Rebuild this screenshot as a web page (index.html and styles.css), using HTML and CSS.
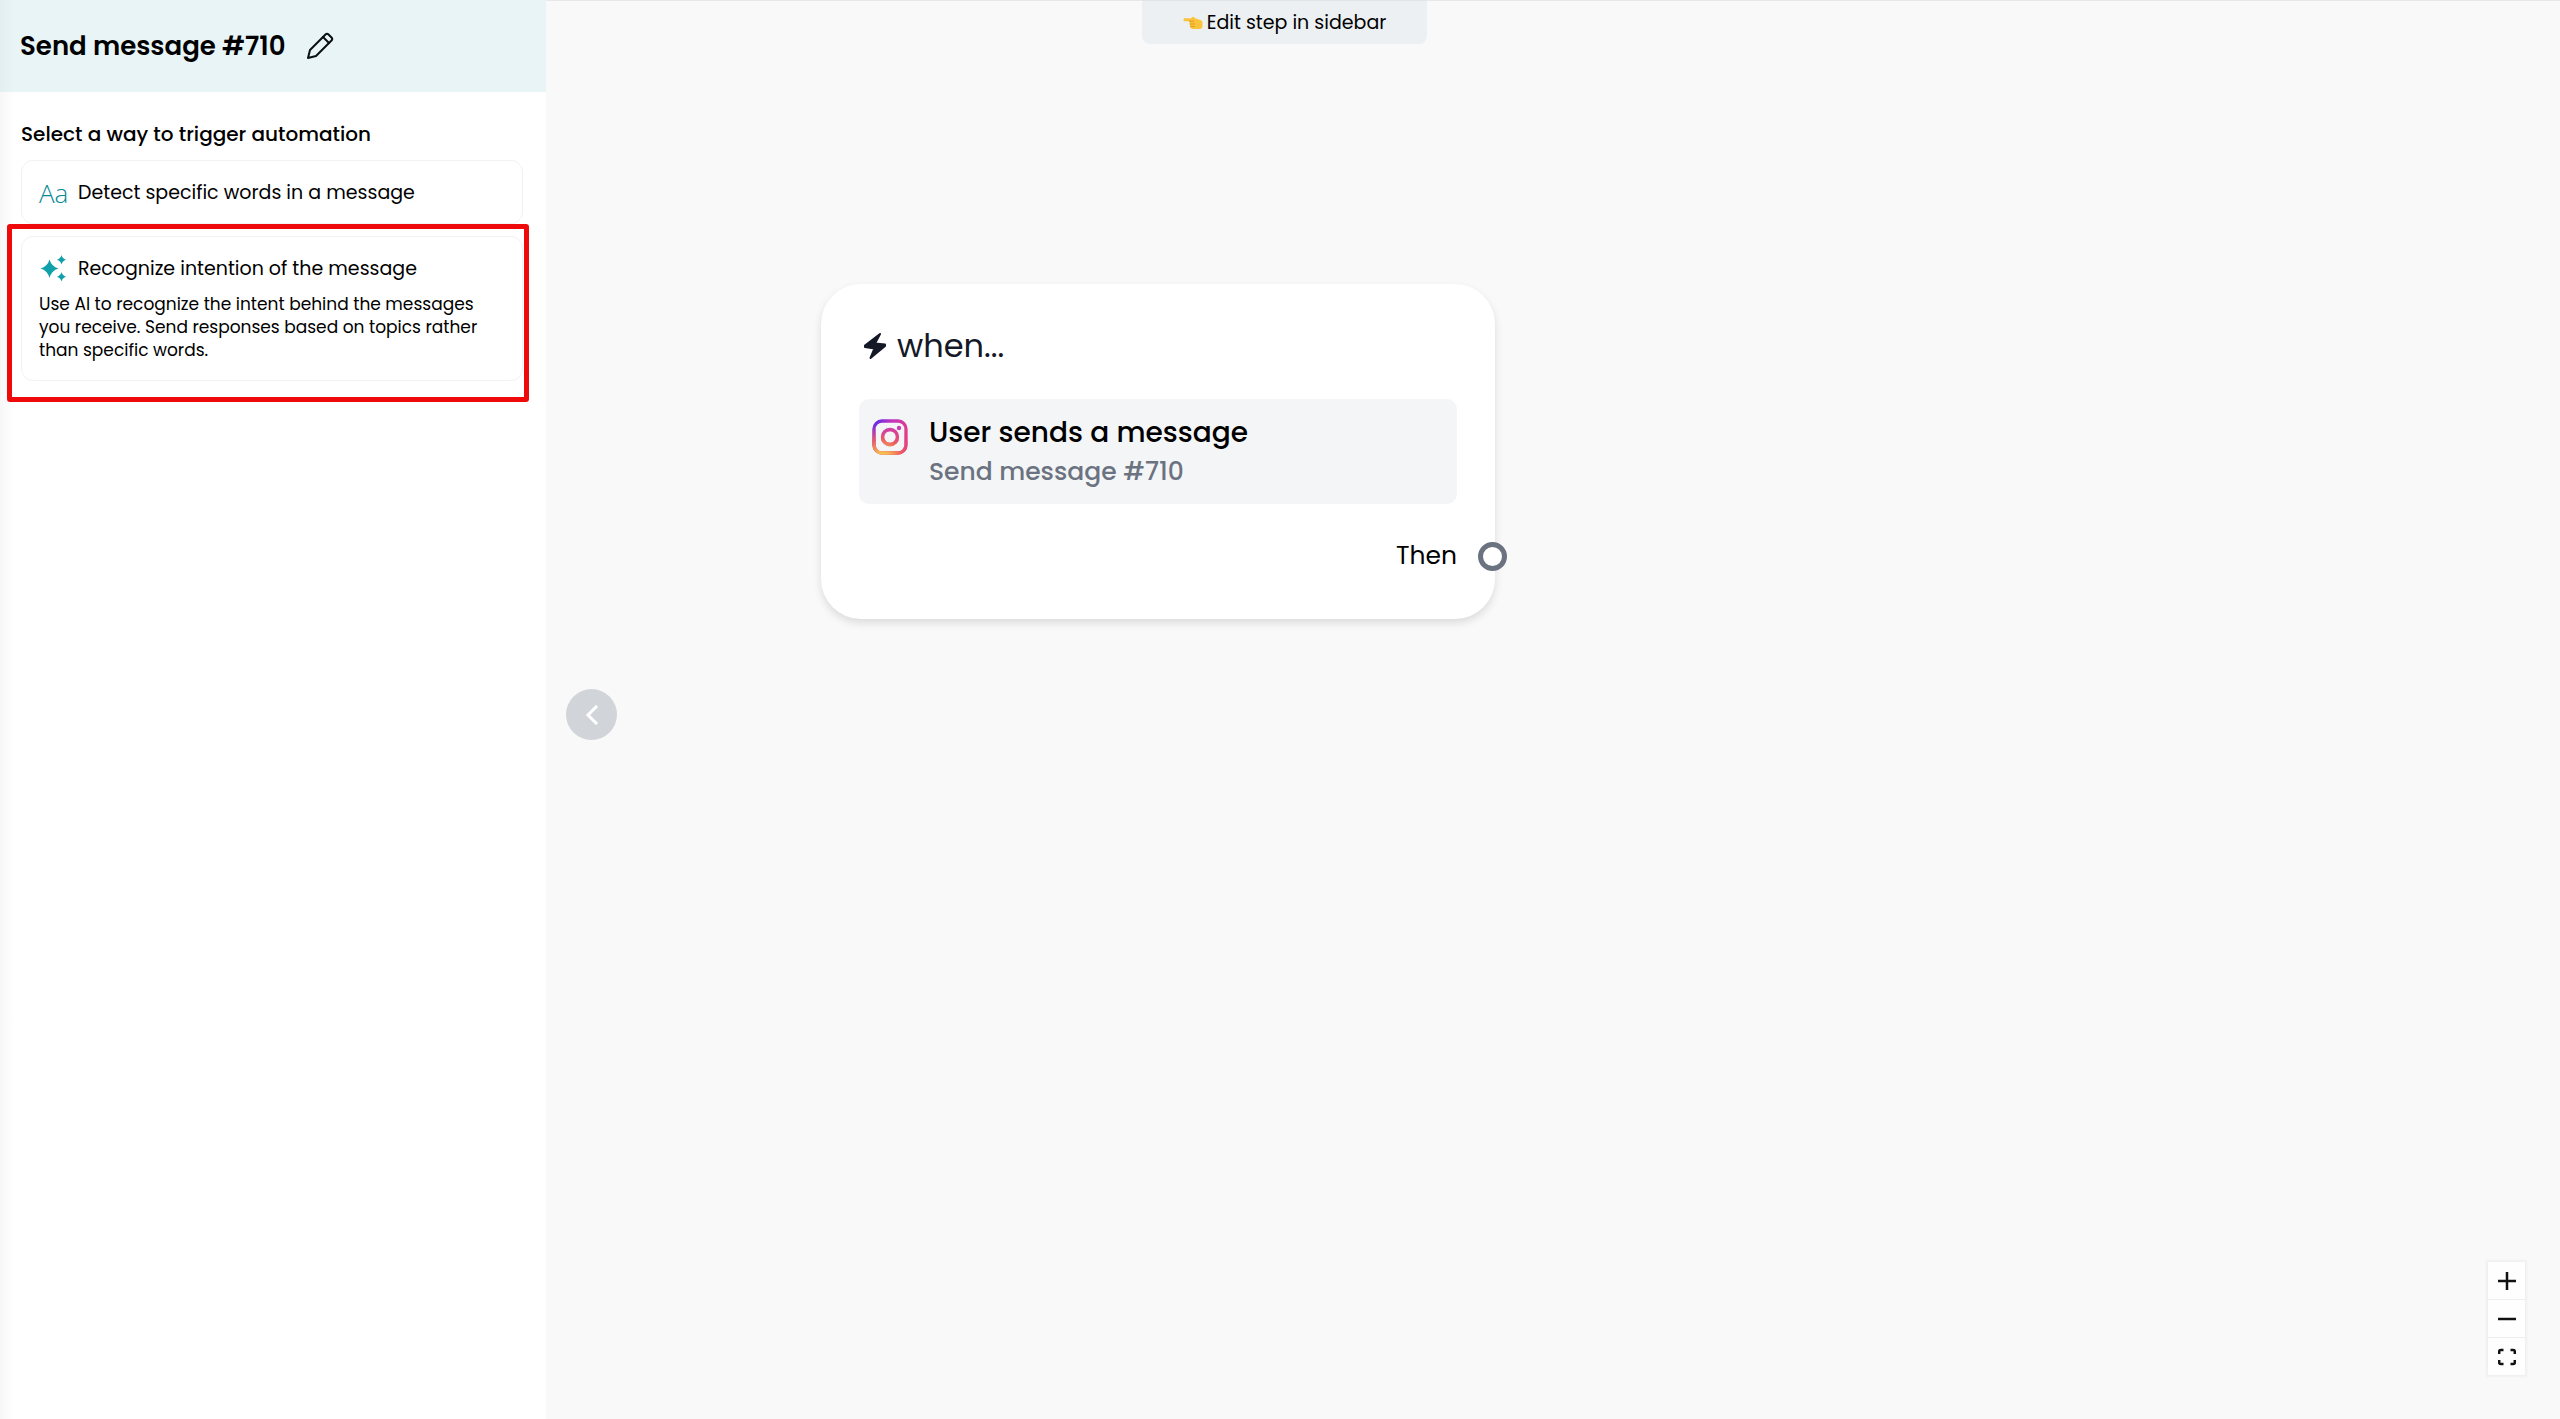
FILE: index.html
```html
<!DOCTYPE html>
<html lang="en">
<head>
<meta charset="utf-8">
<title>Send message #710</title>
<link rel="stylesheet" href="styles.css">
</head>
<body>
<div class="app">
  <aside class="sidebar">
    <header class="sidebar-header">
      <h1 class="sidebar-title">Send message #710</h1>
      <button class="icon-button" type="button" aria-label="Rename step">
        <svg width="28" height="28" viewBox="0 0 28 28" fill="none" stroke="#0b0f14" stroke-width="2" stroke-linejoin="round" stroke-linecap="round">
          <path d="M2 26l2-8L19.500 2.500Q21 1 22.500 2.500L25.500 5.500Q27 7 25.500 8.500L10 24z"/>
          <path d="M17 5l6 6"/>
        </svg>
      </button>
    </header>
    <section class="triggers">
      <h2 class="triggers-heading">Select a way to trigger automation</h2>
      <div class="trigger-list">
        <button class="trigger" type="button">
          <span class="trigger-row"><span class="trigger-aa">Aa</span><span class="trigger-name">Detect specific words in a message</span></span>
        </button>
        <div class="highlighted">
          <button class="trigger trigger-tall" type="button">
            <span class="trigger-row">
              <svg class="trigger-icon" width="29" height="29" viewBox="0 0 29 29" fill="#10a0aa">
                <path d="M10.500 5.500Q12.500 12.500 19.500 14.500Q12.500 16.500 10.500 24Q8.500 16.500 1.500 14.500Q8.500 12.500 10.500 5.500z"/>
                <path d="M22.500 1Q23.500 4.700 27 5.700Q23.500 6.700 22.500 10.400Q21.500 6.700 18 5.700Q21.500 4.700 22.500 1z"/>
                <path d="M22.500 18Q23.500 21.700 27 22.700Q23.500 23.700 22.500 27.400Q21.500 23.700 18 22.700Q21.500 21.700 22.500 18z"/>
              </svg>
              <span class="trigger-name">Recognize intention of the message</span>
            </span>
            <span class="trigger-text">Use AI to recognize the intent behind the messages<br>you receive. Send responses based on topics rather<br>than specific words.</span>
          </button>
        </div>
      </div>
    </section>
  </aside>

  <main class="canvas">
    <article class="node">
      <h2 class="node-title">
        <svg width="24" height="28" viewBox="0 0 24 28" fill="#141827" stroke="#141827" stroke-width="2" stroke-linejoin="round">
          <path d="M17 2L2 13.500V15L11.500 16.500L7.500 26L22 14V12.500L12 11.500z"/>
        </svg>
        when...
      </h2>
      <div class="node-step">
        <svg width="36" height="36" viewBox="0 0 36 36" fill="none" stroke-width="3.300">
          <defs>
            <linearGradient id="insta-base" gradientUnits="userSpaceOnUse" x1="2" y1="2" x2="30" y2="20">
              <stop offset="0" stop-color="#5a2ae8"/>
              <stop offset="0.450" stop-color="#c236c0"/>
              <stop offset="1" stop-color="#e23c86"/>
            </linearGradient>
            <radialGradient id="insta-glow" gradientUnits="userSpaceOnUse" cx="11" cy="38" r="34">
              <stop offset="0" stop-color="#fccf4c"/>
              <stop offset="0.200" stop-color="#f8b24c"/>
              <stop offset="0.550" stop-color="#ec5a5c"/>
              <stop offset="1" stop-color="#e0409a" stop-opacity="0"/>
            </radialGradient>
          </defs>
          <g stroke="url(#insta-base)">
            <rect x="2" y="2" width="32" height="32" rx="8"/>
            <circle cx="18" cy="18" r="7.500"/>
          </g>
          <g stroke="url(#insta-glow)">
            <rect x="2" y="2" width="32" height="32" rx="8"/>
            <circle cx="18" cy="18" r="7.500"/>
          </g>
          <circle cx="27" cy="9" r="2.200" fill="#c83cb4"/>
        </svg>
        <div class="node-lines">
          <p class="node-event">User sends a message</p>
          <p class="node-name">Send message #710</p>
        </div>
      </div>
      <div class="node-output">
        <span>Then</span>
        <button class="port" type="button" aria-label="Connect next step"></button>
      </div>
    </article>
    <button class="collapse" type="button" aria-label="Collapse sidebar">
      <svg width="14" height="20" viewBox="0 0 14 20" fill="none" stroke="#fff" stroke-width="3"><path d="M12 1L3 10l9 9"/></svg>
    </button>
    <div class="zoom-controls">
      <button class="zoom-button" type="button" aria-label="Zoom in">
        <svg width="18" height="18" viewBox="0 0 18 18" stroke="#111" stroke-width="2.500"><path d="M9 0v18M0 9h18"/></svg>
      </button>
      <button class="zoom-button" type="button" aria-label="Zoom out">
        <svg width="18" height="18" viewBox="0 0 18 18" stroke="#111" stroke-width="2.500"><path d="M0 9h18"/></svg>
      </button>
      <button class="zoom-button" type="button" aria-label="Fit view">
        <svg width="18" height="18" viewBox="0 0 18 18" fill="none" stroke="#111" stroke-width="2.500"><path d="M1.200 6V3.500Q1.200 2 2.700 2H5.500M12.500 2H15.300Q16.800 2 16.800 3.500V6M16.800 12V14.500Q16.800 16 15.300 16H12.500M5.500 16H2.700Q1.200 16 1.200 14.500V12"/></svg>
      </button>
    </div>
  </main>

  <div class="hint">
    <svg width="20" height="14" viewBox="0 0 20 14">
      <path fill="#f9c43c" d="M1.200 2.200H8L10 .8Q11.300.6 11.500 2L18 4.300Q19.500 5 19.500 7V10.500Q19.500 12.500 17 13H10Q6.500 12.500 7 9.500Q6 8.500 6.700 6.500L6 5.200H1.200Q-.3 3.700 1.200 2.200z"/>
      <path fill="none" stroke="#dd9a1c" d="M6 5.200h5M7 8h5M7.500 10.500h4"/>
    </svg>
    <span>Edit step in sidebar</span>
  </div>
</div>
</body>
</html>
```
FILE: styles.css
```css
* {
  box-sizing: border-box;
}

body {
  margin: 0;
  font-family: Poppins, Inter, "Noto Sans", sans-serif;
  color: #000;
}

h1,
h2,
p {
  margin: 0;
}

button {
  margin: 0;
  padding: 0;
  border: 0;
  background: none;
  font: inherit;
  color: inherit;
  text-align: left;
  cursor: pointer;
}

svg {
  display: block;
  flex: none;
}

.app {
  position: relative;
  display: flex;
  min-height: 100vh;
}

.sidebar {
  flex: none;
  width: 546px;
  background: linear-gradient(to right, #f7f7f7, #fff 14px);
}

.sidebar-header {
  display: flex;
  align-items: center;
  gap: 20px;
  height: 92px;
  padding: 0 20px;
  background: linear-gradient(to right, #e2efef, #e8f4f6 14px);
}

.sidebar-title {
  font-size: 26px;
  line-height: 40px;
  font-weight: 600;
}

.triggers {
  padding: 26px 23px 26px 21px;
}

.triggers-heading {
  font-size: 20px;
  line-height: 32px;
  font-weight: 500;
}

.trigger-list {
  display: flex;
  flex-direction: column;
  gap: 12px;
  margin-top: 10px;
}

.trigger {
  display: flex;
  flex-direction: column;
  gap: 4px;
  width: 100%;
  padding: 16px 17px 15px;
  border: 1px solid #f2f2f2;
  border-radius: 12px;
}

.trigger-tall {
  padding-bottom: 18px;
}

.trigger-row {
  display: flex;
  align-items: center;
  gap: 10px;
  height: 31px;
}

.trigger-aa {
  width: 29px;
  font-family: "Open Sans", "Noto Sans", sans-serif;
  font-size: 26px;
  font-weight: 300;
  color: #078a98;
}

.trigger-name {
  font-size: 19px;
}

.trigger-text {
  padding-top: 5px;
  font-size: 17px;
  line-height: 23px;
}

.highlighted {
  position: relative;
}

.highlighted::after {
  content: "";
  position: absolute;
  inset: -12px -6px -21px -14px;
  border: 5px solid #ee0a0a;
  border-radius: 3px;
  pointer-events: none;
}

.canvas {
  position: relative;
  flex: 1;
  background: #f9f9f9;
  border-top: 1px solid #e6e8ea;
}

.node {
  position: absolute;
  left: 275px;
  top: 283px;
  width: 674px;
  padding: 40px 38px 43px;
  border-radius: 40px;
  background: #fff;
  box-shadow: 0 4px 8px rgba(0, 0, 0, 0.12);
}

.node-title {
  display: flex;
  align-items: center;
  gap: 10px;
  padding-left: 4px;
  font-size: 32px;
  line-height: 44px;
  font-weight: 400;
  color: #141827;
}

.node-step {
  display: flex;
  gap: 21px;
  margin-top: 31px;
  padding: 14px 13px 13px;
  border-radius: 10px;
  background: #f3f5f7;
}

.node-step svg {
  margin-top: 6px;
}

.node-event,
.node-name {
  font-size: 28px;
  line-height: 39px;
  font-weight: 500;
}

.node-name {
  font-size: 25px;
  color: #6b7280;
}

.node-output {
  position: relative;
  display: flex;
  justify-content: flex-end;
  margin-top: 32px;
  font-size: 25px;
  line-height: 40px;
}

.port {
  position: absolute;
  right: -50px;
  top: 6px;
  width: 29px;
  height: 29px;
  border: 5px solid #6b7280;
  border-radius: 50%;
  background: #fff;
}

.collapse {
  position: absolute;
  left: 20px;
  top: 50%;
  display: flex;
  align-items: center;
  justify-content: center;
  width: 51px;
  height: 51px;
  margin-top: -21px;
  border-radius: 50%;
  background: #d1d5d9;
}

.zoom-controls {
  position: absolute;
  right: 35px;
  bottom: 44px;
  display: flex;
  flex-direction: column;
  gap: 1px;
  background: #eee;
  box-shadow: 0 0 2px 2px rgba(0, 0, 0, 0.04);
}

.zoom-button {
  display: flex;
  align-items: center;
  justify-content: center;
  width: 37px;
  height: 37px;
  background: #fefefe;
}

.hint {
  position: absolute;
  left: 50%;
  top: 0;
  display: flex;
  align-items: center;
  justify-content: center;
  gap: 4px;
  width: 285px;
  height: 44px;
  margin-left: -138px;
  border-top: 1px solid #e2e5e8;
  border-radius: 0 0 8px 8px;
  background: #edf0f3;
  font-size: 19px;
}
```
